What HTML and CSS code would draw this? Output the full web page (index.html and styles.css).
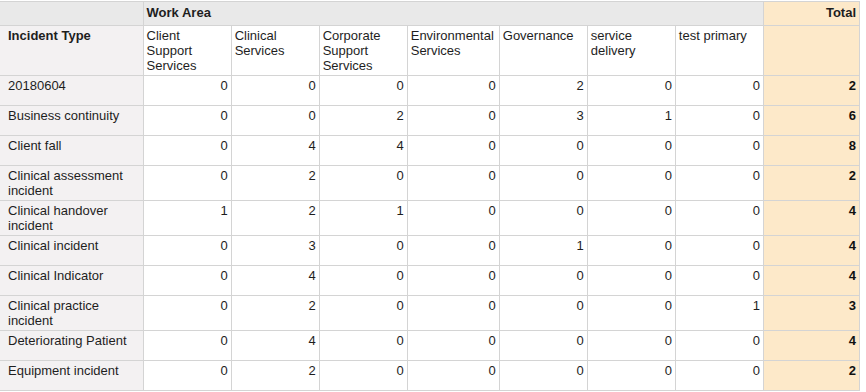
FILE: index.html
```html
<!DOCTYPE html>
<html>
<head>
<meta charset="utf-8">
<link rel="stylesheet" href="styles.css">
</head>
<body>
<div class="wrap">
<table class="pivot">
  <colgroup>
    <col class="c-type">
    <col class="c-area">
    <col class="c-area">
    <col class="c-area">
    <col class="c-env">
    <col class="c-area">
    <col class="c-area">
    <col class="c-area">
    <col class="c-total">
  </colgroup>
  <thead>
    <tr class="r-top">
      <th class="corner"></th>
      <th class="group" colspan="7">Work Area</th>
      <th class="total">Total</th>
    </tr>
    <tr class="r-head">
      <th class="rowhead">Incident Type</th>
      <th class="colhead">Client Support Services</th>
      <th class="colhead">Clinical Services</th>
      <th class="colhead">Corporate Support Services</th>
      <th class="colhead">Environmental Services</th>
      <th class="colhead">Governance</th>
      <th class="colhead">service delivery</th>
      <th class="colhead">test primary</th>
      <th class="total"></th>
    </tr>
  </thead>
  <tbody>
    <tr><th class="label">20180604</th><td>0</td><td>0</td><td>0</td><td>0</td><td>2</td><td>0</td><td>0</td><td class="total">2</td></tr>
    <tr><th class="label">Business continuity</th><td>0</td><td>0</td><td>2</td><td>0</td><td>3</td><td>1</td><td>0</td><td class="total">6</td></tr>
    <tr><th class="label">Client fall</th><td>0</td><td>4</td><td>4</td><td>0</td><td>0</td><td>0</td><td>0</td><td class="total">8</td></tr>
    <tr><th class="label">Clinical assessment incident</th><td>0</td><td>2</td><td>0</td><td>0</td><td>0</td><td>0</td><td>0</td><td class="total">2</td></tr>
    <tr><th class="label">Clinical handover incident</th><td>1</td><td>2</td><td>1</td><td>0</td><td>0</td><td>0</td><td>0</td><td class="total">4</td></tr>
    <tr><th class="label">Clinical incident</th><td>0</td><td>3</td><td>0</td><td>0</td><td>1</td><td>0</td><td>0</td><td class="total">4</td></tr>
    <tr><th class="label">Clinical Indicator</th><td>0</td><td>4</td><td>0</td><td>0</td><td>0</td><td>0</td><td>0</td><td class="total">4</td></tr>
    <tr><th class="label">Clinical practice incident</th><td>0</td><td>2</td><td>0</td><td>0</td><td>0</td><td>0</td><td>1</td><td class="total">3</td></tr>
    <tr><th class="label">Deteriorating Patient</th><td>0</td><td>4</td><td>0</td><td>0</td><td>0</td><td>0</td><td>0</td><td class="total">4</td></tr>
    <tr><th class="label">Equipment incident</th><td>0</td><td>2</td><td>0</td><td>0</td><td>0</td><td>0</td><td>0</td><td class="total">2</td></tr>
  </tbody>
</table>
</div>
</body>
</html>
```

FILE: styles.css
```css
html, body {
  margin: 0;
  padding: 0;
  background: #ffffff;
  overflow: hidden;
}

.wrap {
  padding-top: 1px;
}

.pivot {
  border-collapse: collapse;
  table-layout: fixed;
  width: 860px;
  font-family: "Liberation Sans", Arial, sans-serif;
  font-size: 13px;
  line-height: 15px;
  color: #1e1e1e;
}

.c-type { width: 143px; }
.c-area { width: 88px; }
.c-env { width: 92px; }
.c-total { width: 96px; }

.pivot th,
.pivot td {
  border: 1px solid #d4d4d4;
  padding: 2px 3px;
  vertical-align: top;
  text-align: left;
  font-weight: normal;
}

.pivot tr > :first-child {
  border-left: none;
  padding-left: 8px;
}

.r-top th {
  height: 18px;
  background: #e9e9e9;
  font-weight: bold;
  padding-top: 3px;
}

.r-top th.total {
  text-align: right;
}

.r-head th {
  background: #ffffff;
}

.r-head th.rowhead {
  background: #f3f1f2;
  font-weight: bold;
}

.pivot tbody th.label {
  background: #f3f1f2;
  font-weight: normal;
}

.pivot tbody td {
  height: 25px;
  text-align: right;
  background: #ffffff;
}

.pivot .total {
  background: #fde9c9;
}

.pivot tbody td.total {
  font-weight: bold;
  color: #111111;
}
```
